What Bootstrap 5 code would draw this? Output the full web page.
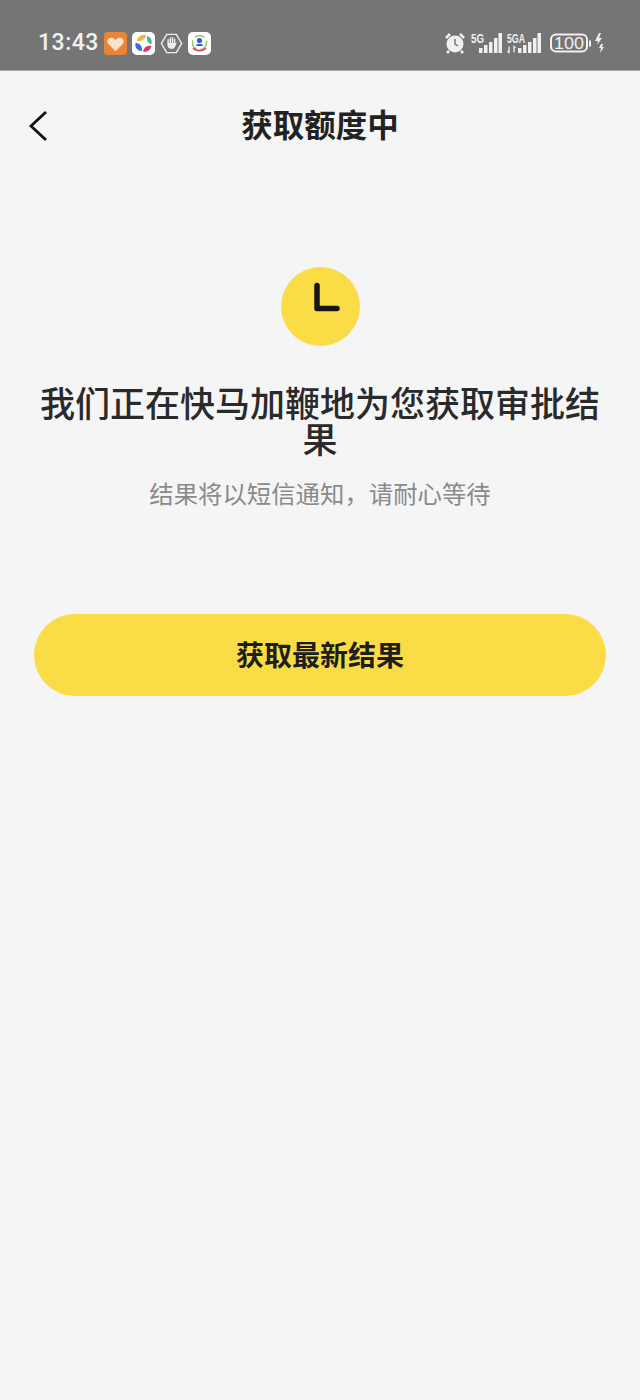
<!DOCTYPE html>
<html lang="zh">
<head>
  <meta charset="UTF-8" />
  <meta name="viewport" content="width=device-width, initial-scale=1" />
  <title>获取额度中</title>
  <link href="https://cdn.jsdelivr.net/npm/bootstrap@5.3.0/dist/css/bootstrap.min.css" rel="stylesheet" />
  <style>
    body {
      background: #f5f5f5;
      min-height: 1400px;
      font-family: "Noto Sans CJK SC", "Liberation Sans", sans-serif;
      color: #222;
    }
    .status-strip {
      height: 71px;
      background: #757575;
      border-bottom: 1px solid #a8a8a8;
      padding: 16px 34px 0 38px;
      color: #f2f2f2;
    }
    .clock-text {
      font-family: Roboto, "Liberation Sans", sans-serif;
      font-size: 23px;
      font-weight: 500;
      letter-spacing: 0.5px;
      line-height: 24px;
    }
    .status-apps { gap: 5px; margin-left: 5px; }
    .title-bar { height: 110px; padding-bottom: 4px; }
    .back-link { left: 27px; top: 38px; line-height: 0; }
    .page-title { font-size: 31.5px; font-weight: 700; line-height: 1; letter-spacing: 0; }
    .wait-disc { width: 79px; height: 79px; background: #fadd46; margin-top: 86px; }
    .wait-heading {
      font-size: 35px;
      font-weight: 500;
      line-height: 36px;
      padding: 0 38px;
      margin-top: 38px;
      color: #2a2a2a;
    }
    .wait-hint { font-size: 24.4px; line-height: 36px; color: #8a8a8a; margin-top: 19px; }
    .refresh-btn {
      display: block;
      height: 82px;
      margin: 103px 34px 0;
      padding-bottom: 8px;
      width: 572px;
      background: #fadd46;
      border: 0;
      border-radius: 41px;
      font-size: 28px;
      font-weight: 700;
      color: #1e1e1e;
    }
  </style>
</head>
<body>
  <div class="status-strip d-flex align-items-center justify-content-between">
    <div class="d-flex align-items-center">
      <span class="clock-text">13:43</span>
      <div class="status-apps d-flex align-items-center">
        <svg width="23" height="23" viewBox="0 0 24 24"><rect width="24" height="24" rx="4" fill="#ea8438"/><path d="M12 20 4.500 12.500C2 9.500 4.500 5.500 8 6c2 .2 3 1.300 4 2.500C13 7.300 14 6.200 16 6c3.500-.5 6 3.500 3.500 6.500z" fill="#fbe3cd"/></svg>
        <svg width="23" height="23" viewBox="0 0 23 23"><rect width="23" height="23" rx="5" fill="#fff"/><path d="M5 9C5 5 10 2 14 3.500 13 7 10 9.500 5 9z" fill="#f2b632"/><path d="M15 4c3.500 1 5.500 4 4.500 8-3.500 0-5-3.500-4.500-8z" fill="#46b98c"/><path d="M3.500 11c3.500 0 7 2.500 6.500 8-4.500 0-7.500-3.500-6.500-8z" fill="#2f6fe0"/><path d="M11 19.500c1-4.500 4.500-6.500 8.500-5.500-1 4.500-4.500 6.500-8.500 5.500z" fill="#e5345c"/></svg>
        <svg width="23" height="23" viewBox="0 0 24 24"><path d="M7 2.500h10L22.500 12 17 21.500H7L1.500 12z" fill="none" stroke="#eee" stroke-width="1.500"/><path d="M8.500 12V8M10.800 12V6.200M13 12V6M15.200 12V7.500" fill="none" stroke="#eee" stroke-width="1.500" stroke-linecap="round"/><path d="M7.800 11.500h8.200l1.500-.5-1.700 4.500c-.5 1.300-2 2.200-3.500 2.200-2.800 0-4.500-1.500-4.500-3.500z" fill="#eee"/></svg>
        <svg width="23" height="23" viewBox="0 0 23 23"><rect width="23" height="23" rx="5" fill="#fff"/><circle cx="11.500" cy="10.500" r="7" fill="none" stroke="#8ec86a" stroke-width="1.500" stroke-dasharray="10 4"/><path d="M5 16c3 3.500 10 3.500 13 0" fill="none" stroke="#d8465c" stroke-width="1.600"/><circle cx="11.500" cy="8.500" r="2.600" fill="#2d62c8"/><path d="M8 14c0-3 7-3 7 0z" fill="#2d62c8"/></svg>
      </div>
    </div>
    <svg width="162" height="24" viewBox="0 0 162 24" fill="#f0f0f0">
      <circle cx="11" cy="13" r="8.500" fill="#f0f0f0"/>
      <path d="M2 7l4-4M20 7l-4-4M5 20l-2 2M17 20l2 2" stroke="#f0f0f0" stroke-width="2.500"/>
      <path d="M11 8v5l3 2" stroke="#757575" stroke-width="1.500" fill="none"/>
      <text x="27" y="12" font-family="Liberation Sans" font-size="12" font-weight="700" textLength="13" lengthAdjust="spacingAndGlyphs">5G</text>
      <rect x="35" y="17" width="3.500" height="5"/><rect x="40" y="14" width="3.500" height="8"/><rect x="45" y="11" width="3.500" height="11"/><rect x="50" y="7" width="3.500" height="15"/><rect x="54.500" y="2" width="3.500" height="20"/>
      <text x="63" y="12" font-family="Liberation Sans" font-size="12" font-weight="700" textLength="18" lengthAdjust="spacingAndGlyphs">5GA</text>
      <path d="M65 15.500v6l-1.500-1.500M70 21.500v-6l1.500 1.500" fill="none" stroke="#f0f0f0" stroke-width="1.300"/>
      <rect x="74" y="17" width="3.500" height="5"/><rect x="79" y="14" width="3.500" height="8"/><rect x="84" y="11" width="3.500" height="11"/><rect x="89" y="7" width="3.500" height="15"/><rect x="93.500" y="2" width="3.500" height="20"/>
      <rect x="107" y="3.500" width="36" height="17" rx="5" fill="none" stroke="#f0f0f0" stroke-width="2"/>
      <text x="125" y="18" text-anchor="middle" font-family="Liberation Sans" font-size="17" textLength="30" lengthAdjust="spacingAndGlyphs">100</text>
      <rect x="145" y="9.500" width="2" height="6"/>
      <path d="M155 2l-4 8h3l-1 4 5-7h-3l2-5zM157 13l-2 4h2l-1 5 4-6h-2l1-3z"/>
    </svg>
  </div>

  <div class="title-bar position-relative d-flex align-items-center justify-content-center">
    <a class="back-link position-absolute" href="#" aria-label="返回">
      <svg width="22" height="34" viewBox="0 0 22 34"><path d="M19 3 4 17l15 14" fill="none" stroke="#111" stroke-width="2.800"/></svg>
    </a>
    <h1 class="page-title m-0">获取额度中</h1>
  </div>

  <div class="text-center">
    <div class="wait-disc rounded-circle mx-auto d-flex align-items-center justify-content-center">
      <svg width="79" height="79" viewBox="0 0 79 79"><path d="M36 18.500v23H56" fill="none" stroke="#161616" stroke-width="5.500" stroke-linecap="round" stroke-linejoin="round"/></svg>
    </div>
    <h2 class="wait-heading mb-0">我们正在快马加鞭地为您获取审批结果</h2>
    <p class="wait-hint mb-0">结果将以短信通知，请耐心等待</p>
    <button type="button" class="btn refresh-btn">获取最新结果</button>
  </div>
  <script src="https://cdn.jsdelivr.net/npm/bootstrap@5.3.0/dist/js/bootstrap.bundle.min.js"></script>
</body>
</html>
